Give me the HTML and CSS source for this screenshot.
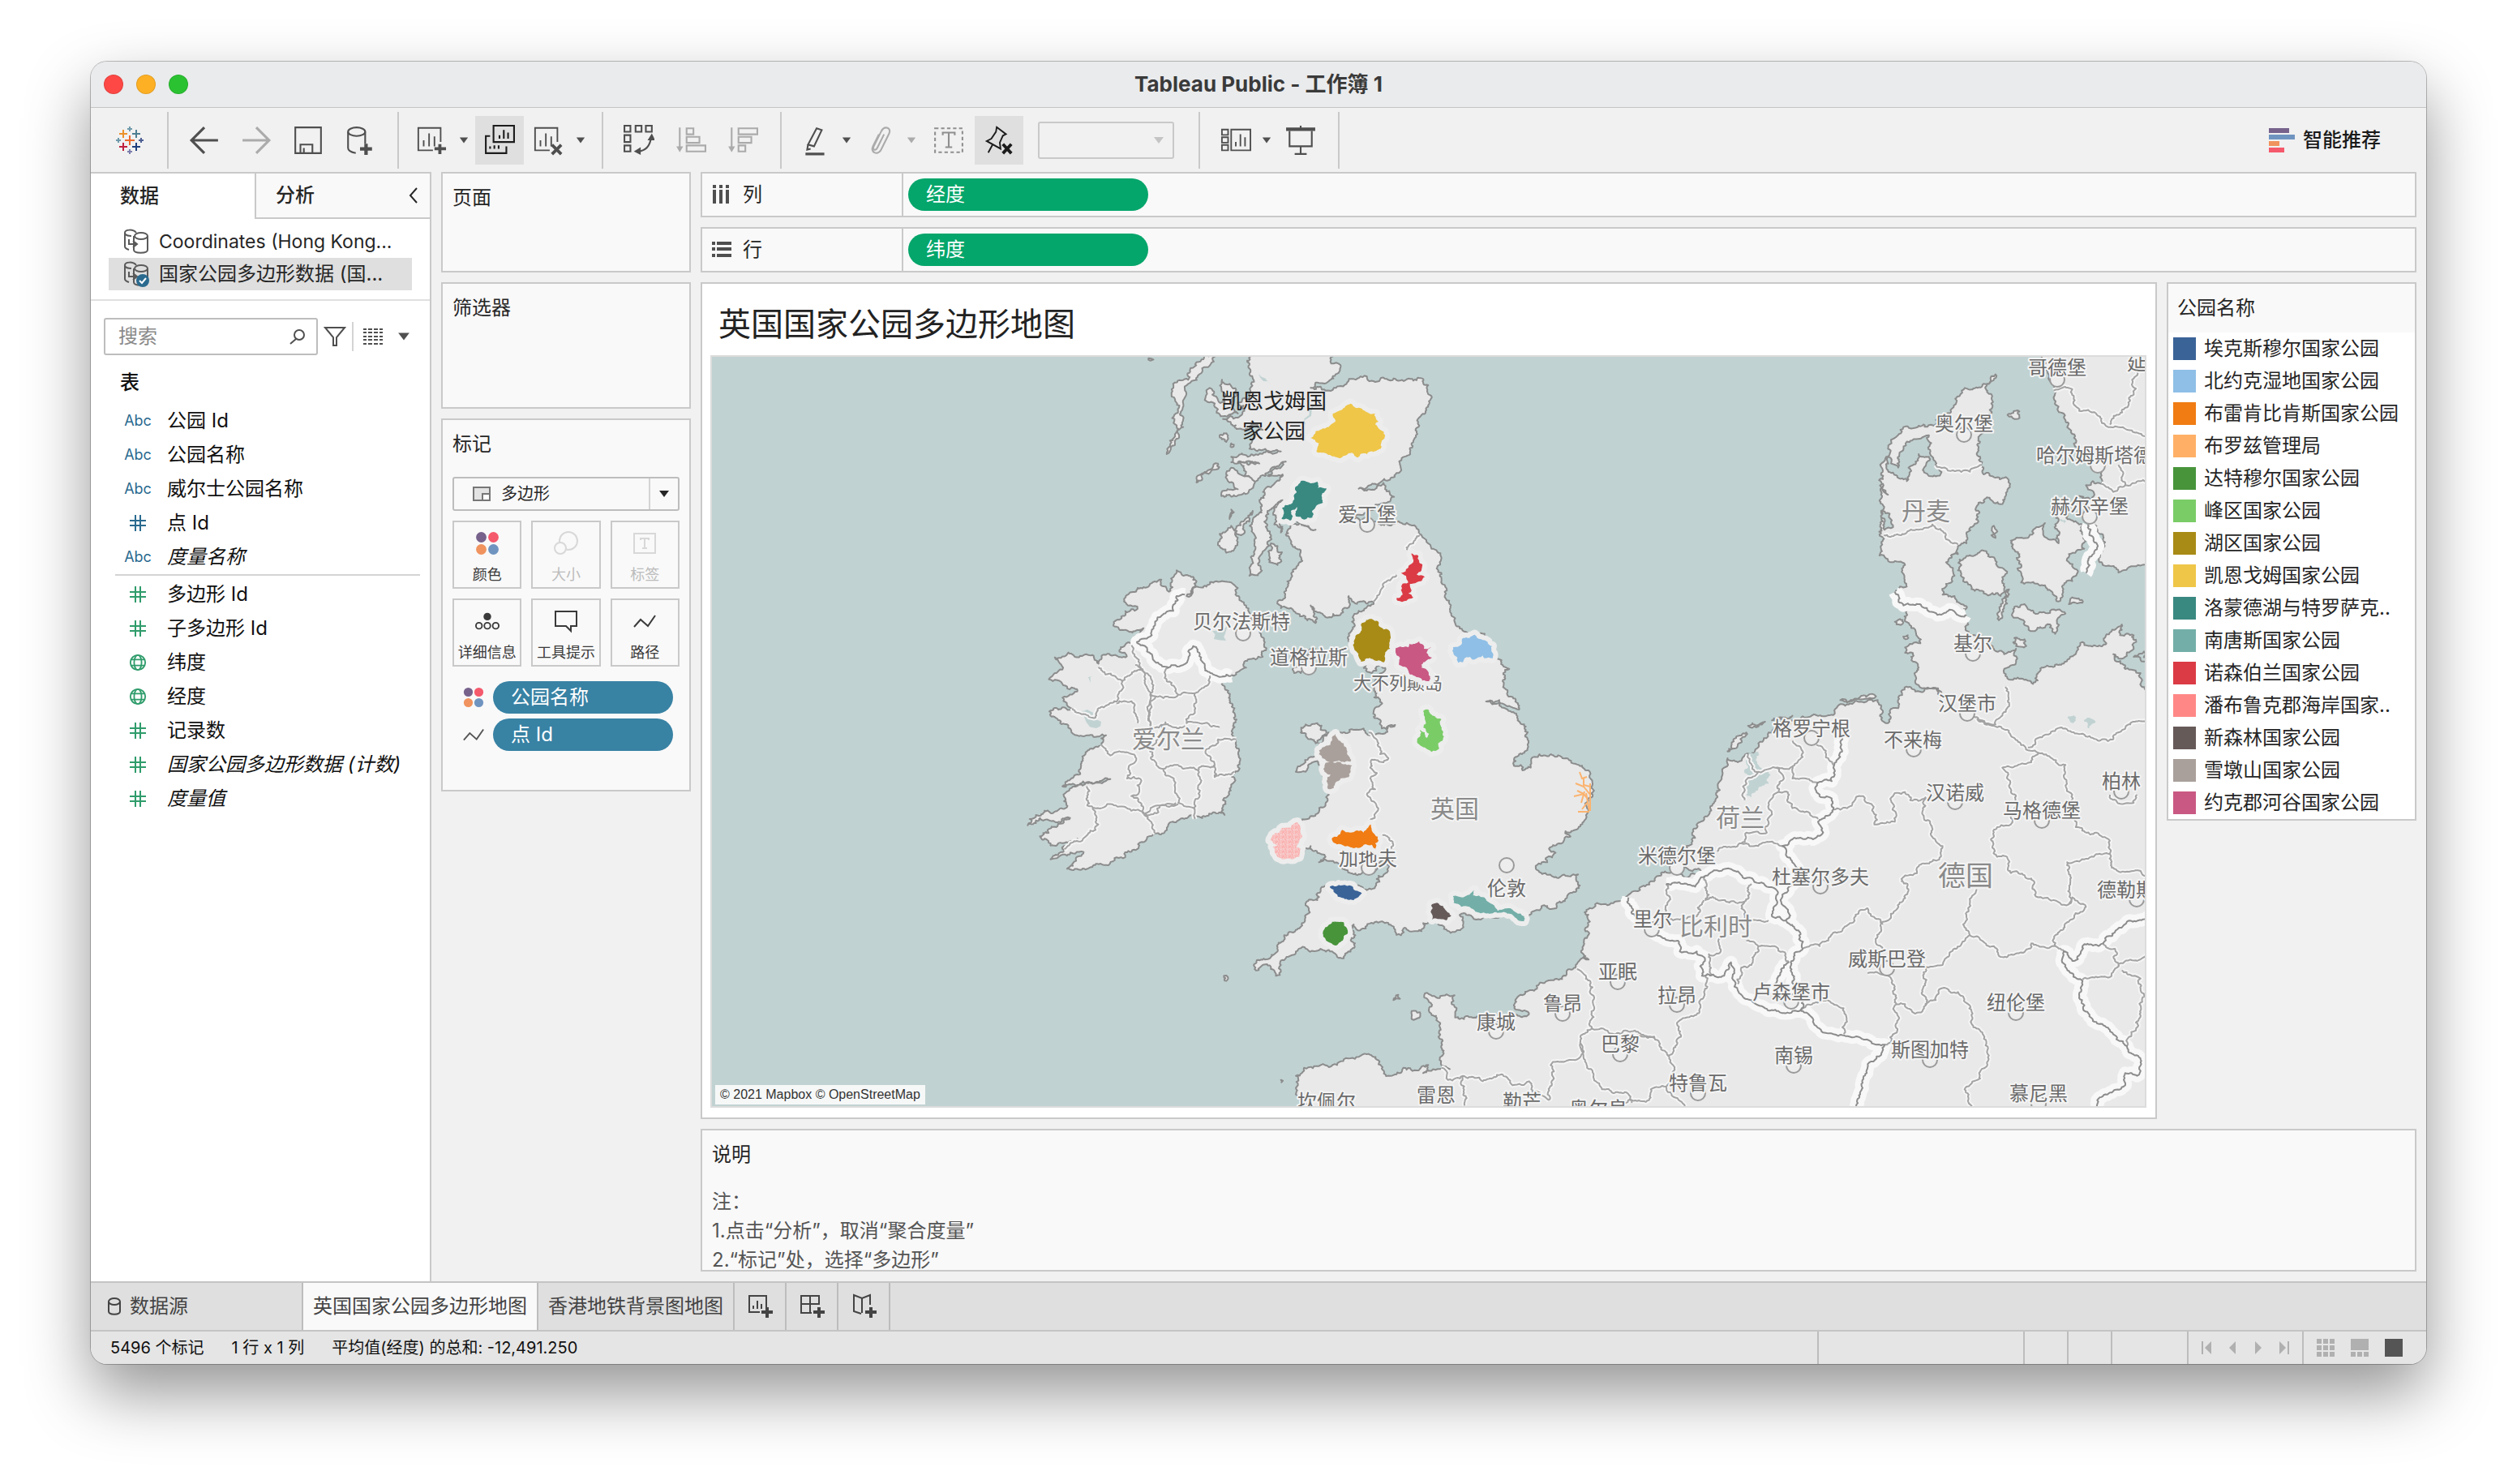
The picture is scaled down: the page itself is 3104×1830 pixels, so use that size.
FILE: index.html
```html
<!DOCTYPE html>
<html lang="zh-CN">
<head>
<meta charset="utf-8">
<title>Tableau Public - 工作簿 1</title>
<link rel="stylesheet" href="styles.css">
</head>
<body>
<svg class="sprite" aria-hidden="true">
  <defs>
    <symbol id="i-back" viewBox="0 0 36 36"><path class="s3" d="M34 18H3M18 3 3 18l15 15"/></symbol>
    <symbol id="i-fwd" viewBox="0 0 36 36"><path class="s3" d="M2 18h31M18 3l15 15-15 15"/></symbol>
    <symbol id="i-save" viewBox="0 0 36 36"><path class="s2" d="M3 3h30v30H3zM9 33V23h14v10M13 33v-6"/></symbol>
    <symbol id="i-dbadd" viewBox="0 0 36 36"><path class="s2" d="M4 8v19c0 3 4 5 9 6M24 8v14"/><ellipse class="s2" cx="14" cy="8" rx="10" ry="5"/><path class="s4" d="M25 22v13M18 28h14"/></symbol>
    <symbol id="i-sheetadd" viewBox="0 0 40 40"><path class="s2" d="M32 22V4H3v29h19M10 28v-8M17 28V11M24 28V15"/><path class="s4" d="M31 25v13M24 31h15"/></symbol>
    <symbol id="i-sheetdup" viewBox="0 0 36 36"><path class="s2" d="M11 1h24v19H11zM18 16v-4M23 16V6M28 16v-7M7 13H2v20h24v-8M7 28v-3M12 28v-4M17 28v-4"/></symbol>
    <symbol id="i-sheetclear" viewBox="0 0 40 40"><path class="s2" d="M32 22V4H3v29h19M10 28v-8M17 28V11M24 28V15"/><path class="s4" d="M25 26l12 12M37 26 25 38"/></symbol>
    <symbol id="i-swap" viewBox="0 0 36 36"><path class="s2" d="M1 1h7v7H1zM14 1h7v7h-7zM26 1h7v7h-7zM1 12h7v8H1zM1 24h7v7H1zM17 31c9-1 14-7 15-16"/><path d="m12 31 8-5v9zM28 18l9 0-4-8z"/></symbol>
    <symbol id="i-asc" viewBox="0 0 36 36"><path class="s2" d="M5 3v26M13 4h8v7h-8zM13 14h15v7H13zM13 24h22v7H13z"/><path d="m1 25 8 0-4 7z"/></symbol>
    <symbol id="i-desc" viewBox="0 0 36 36"><path class="s2" d="M5 3v26M13 4h22v7H13zM13 14h15v7H13zM13 24h8v7h-8z"/><path d="m1 25 8 0-4 7z"/></symbol>
    <symbol id="i-pen" viewBox="0 0 36 36"><path class="s2" d="m19 4 6 2-9 19-7-2zM9 23l-1 6 4-1"/><path class="s3" d="M6 34h22"/></symbol>
    <symbol id="i-clip" viewBox="0 0 36 36"><path class="s2" d="m22 11-8 16c-2 4-6 2-4-2l9-18c4-7 12-3 9 3L18 30c-4 6-12 2-9-5l7-14"/></symbol>
    <symbol id="i-text" viewBox="0 0 36 36"><path class="s2" stroke-dasharray="4 3" d="M2 4h32v28H2z"/><path class="s2" d="M11 12V9h14v3M18 9v17M14 26h8"/></symbol>
    <symbol id="i-pin" viewBox="0 0 40 40"><path class="s2" d="m17 3 12 9-4 2-4 9 1 8L4 21l6-3 6-9zM12 25 6 36"/><path class="s4" d="m25 25 11 12M36 25 25 37"/></symbol>
    <symbol id="i-cards" viewBox="0 0 40 36"><path class="s2" d="M2 4h8v7H2zM2 14h8v7H2zM2 24h8v7H2zM14 4h25v27H14zM20 26v-6M26 26V10M32 26V14"/></symbol>
    <symbol id="i-present" viewBox="0 0 36 36"><path class="s2" d="M5 7v18h26V7M18 1v4M18 25v9M11 34h14"/><path class="s4" d="M1 5h34"/></symbol>
    <symbol id="i-caret" viewBox="0 0 14 10"><path d="M1 1h12L7 9z"/></symbol>
    <symbol id="i-db" viewBox="0 0 34 34"><path class="s2" d="M16 6C12 1 2 2 2 6v17c0 2 2 3 5 4M2 7c1 2 4 3 8 3M13 10v17c0 5 17 5 17 0V10M7 14v6h9M12 16l5 4-5 4"/><ellipse class="s2" cx="22" cy="10" rx="8" ry="4"/></symbol>
    <symbol id="i-search" viewBox="0 0 20 20"><circle class="s2" cx="12" cy="8" r="6"/><path class="s2" d="m8 13-7 6"/></symbol>
    <symbol id="i-filter" viewBox="0 0 28 26"><path class="s2" d="M2 2h24L16 14v10h-4V14z"/></symbol>
    <symbol id="i-list" viewBox="0 0 24 20"><path class="s2" d="M0 1h4M6 1h5M13 1h5M20 1h4M0 5h4M6 5h5M13 5h5M20 5h4M0 10h4M6 10h5M13 10h5M20 10h4M0 14h4M6 14h5M13 14h5M20 14h4M0 19h4M6 19h5M13 19h5M20 19h4"/></symbol>
    <symbol id="i-hash" viewBox="0 0 22 22"><path class="s2" d="M8 1v20M14 1v20M1 8h20M1 14h20"/></symbol>
    <symbol id="i-globe" viewBox="0 0 24 24"><circle class="s2" cx="12" cy="12" r="10"/><ellipse class="s2" cx="12" cy="12" rx="5" ry="10"/><path class="s2" d="M3 8h18M3 16h18"/></symbol>
    <symbol id="i-color" viewBox="0 0 28 28"><circle cx="7" cy="7" r="6" fill="#77628c"/><circle cx="21" cy="7" r="6" fill="#f5596c"/><circle cx="7" cy="21" r="6" fill="#f0935e"/><circle cx="21" cy="21" r="6" fill="#7094c0"/></symbol>
    <symbol id="i-size" viewBox="0 0 30 30"><circle class="s2" cx="18" cy="12" r="11"/><circle class="s2" cx="8" cy="21" r="7"/></symbol>
    <symbol id="i-label" viewBox="0 0 30 28"><path class="s2" d="M2 2h26v24H2zM10 10V8h10v2M15 8v12M12 20h6"/></symbol>
    <symbol id="i-detail" viewBox="0 0 32 24"><circle cx="16" cy="6" r="5"/><circle class="s2" cx="5" cy="18" r="4"/><circle class="s2" cx="16" cy="18" r="4"/><circle class="s2" cx="27" cy="18" r="4"/></symbol>
    <symbol id="i-tip" viewBox="0 0 30 28"><path class="s2" d="M2 2h26v18h-7v6l-6-6H2z"/></symbol>
    <symbol id="i-path" viewBox="0 0 30 20"><path class="s2" d="m2 17 8-9 9 8L28 3"/></symbol>
    <symbol id="i-poly" viewBox="0 0 24 20"><path class="s2" d="M2 2h20v16H2z"/><path class="s2 hole" d="M13 10h9v8h-9z"/></symbol>
    <symbol id="i-src" viewBox="0 0 18 24"><path class="s2" d="M2 6v12c0 5 14 5 14 0V6"/><ellipse class="s2" cx="9" cy="6" rx="7" ry="4"/></symbol>
    <symbol id="i-t1" viewBox="0 0 32 32"><path class="s2" d="M24 17V3H3v20h13M8 19v-4M13 19V9M18 19v-6"/><path class="s4" d="M25 17v13M18 23h14"/></symbol>
    <symbol id="i-t2" viewBox="0 0 32 32"><path class="s2" d="M25 14V3H3v21h13M3 13h22M14 3v21"/><path class="s4" d="M25 17v13M18 23h14"/></symbol>
    <symbol id="i-t3" viewBox="0 0 32 32"><path class="s2" d="M24 14V2l-10 4L4 2v20l9 3M14 6v18"/><path class="s4" d="M25 17v13M18 23h14"/></symbol>
  </defs>
</svg>

<div class="window">
  <header class="titlebar">
    <div class="lights"><span class="light red"></span><span class="light amber"></span><span class="light green"></span></div>
    <h1>Tableau Public - 工作簿 1</h1>
  </header>

  <nav class="toolbar" aria-label="工具栏">
    <div class="group brand">
      <svg width="36" height="36" viewBox="-18 -18 36 36" fill="none" stroke-width="2">
        <path stroke="#eb6a2d" d="M0-6V6M-6 0H6"/><path stroke="#eb9129" d="M-8-13v10M-13-8h10"/><path stroke="#4e7f92" d="M8-13v10M3-8h10"/><path stroke="#c0203f" d="M-8 3v10M-13 8h10"/><path stroke="#1f3f7e" d="M8 3v10M3 8h10"/><path stroke="#6f9aab" d="M0-17v6M-3-14h6M-14-3v6M-17 0h6"/><path stroke="#7c7fae" d="M0 11v6M-3 14h6"/><path stroke="#4e5f93" d="M14-3v6M11 0h6"/>
      </svg>
    </div>
    <div class="group">
      <button class="tool wide" aria-label="撤消"><svg><use href="#i-back"/></svg></button>
      <button class="tool wide" aria-label="重做" disabled><svg><use href="#i-fwd"/></svg></button>
      <button class="tool wide" aria-label="保存"><svg><use href="#i-save"/></svg></button>
      <button class="tool wide" aria-label="新建数据源"><svg><use href="#i-dbadd"/></svg></button>
    </div>
    <div class="group tight">
      <button class="tool" aria-label="新建工作表"><svg><use href="#i-sheetadd"/></svg></button>
      <button class="drop" aria-label="新建选项"><svg><use href="#i-caret"/></svg></button>
      <button class="tool on" aria-label="复制工作表"><svg><use href="#i-sheetdup"/></svg></button>
      <button class="tool" aria-label="清除工作表"><svg><use href="#i-sheetclear"/></svg></button>
      <button class="drop" aria-label="清除选项"><svg><use href="#i-caret"/></svg></button>
    </div>
    <div class="group">
      <button class="tool wide" aria-label="交换行和列"><svg><use href="#i-swap"/></svg></button>
      <button class="tool wide" aria-label="升序" disabled><svg><use href="#i-asc"/></svg></button>
      <button class="tool wide" aria-label="降序" disabled><svg><use href="#i-desc"/></svg></button>
    </div>
    <div class="group format">
      <button class="tool slim" aria-label="突出显示"><svg><use href="#i-pen"/></svg></button>
      <button class="drop" aria-label="突出显示选项"><svg><use href="#i-caret"/></svg></button>
      <button class="tool slim" aria-label="组成员" disabled><svg><use href="#i-clip"/></svg></button>
      <button class="drop" aria-label="组选项" disabled><svg><use href="#i-caret"/></svg></button>
      <button class="tool wide" aria-label="显示标记标签"><svg class="soft"><use href="#i-text"/></svg></button>
      <button class="tool on" aria-label="固定轴"><svg><use href="#i-pin"/></svg></button>
      <span class="fit"><select aria-label="适合" disabled><option></option></select><svg><use href="#i-caret"/></svg></span>
    </div>
    <div class="group show">
      <button class="tool slim" aria-label="显示卡"><svg><use href="#i-cards"/></svg></button>
      <button class="drop" aria-label="显示卡选项"><svg><use href="#i-caret"/></svg></button>
      <button class="tool slim" aria-label="演示模式"><svg><use href="#i-present"/></svg></button>
    </div>
    <button class="showme"><svg width="32" height="30"><path fill="#77628c" d="M0 0h25v6H0z"/><path fill="#7094c0" d="M0 8h32v6H0z"/><path fill="#f0935e" d="M0 16h13v6H0z"/><path fill="#f5596c" d="M0 24h19v6H0z"/></svg>智能推荐</button>
  </nav>

  <main class="workspace">
    <aside class="data">
      <div class="tabs">
        <button class="tab active">数据</button>
        <button class="tab">分析<svg width="12" height="20"><path class="s2" d="M10 1 2 10l8 9"/></svg></button>
      </div>
      <ul class="sources">
        <li class="latin"><svg><use href="#i-db"/></svg>Coordinates (Hong Kong...</li>
        <li class="picked"><svg><use href="#i-db"/><circle cx="24" cy="25" r="8" fill="#2a6a8f"/><path d="m20 25 3 3 5-6" fill="none" stroke="#fff" stroke-width="2"/></svg>国家公园多边形数据 (国...</li>
      </ul>
      <div class="finder">
        <label class="search"><input type="text" placeholder="搜索" aria-label="搜索"><svg><use href="#i-search"/></svg></label>
        <button class="filter" aria-label="筛选"><svg width="28" height="26"><use href="#i-filter"/></svg></button>
        <button class="view" aria-label="视图"><svg width="24" height="20"><use href="#i-list"/></svg></button>
        <button class="more" aria-label="更多"><svg width="16" height="12"><use href="#i-caret"/></svg></button>
      </div>
      <h2>表</h2>
      <ul class="fields dims">
        <li><span class="kind">Abc</span>公园 Id</li>
        <li><span class="kind">Abc</span>公园名称</li>
        <li><span class="kind">Abc</span>威尔士公园名称</li>
        <li><span class="kind"><svg><use href="#i-hash"/></svg></span>点 Id</li>
        <li class="gen"><span class="kind">Abc</span>度量名称</li>
      </ul>
      <ul class="fields meas">
        <li><span class="kind"><svg><use href="#i-hash"/></svg></span>多边形 Id</li>
        <li><span class="kind"><svg><use href="#i-hash"/></svg></span>子多边形 Id</li>
        <li><span class="kind"><svg><use href="#i-globe"/></svg></span>纬度</li>
        <li><span class="kind"><svg><use href="#i-globe"/></svg></span>经度</li>
        <li><span class="kind"><svg><use href="#i-hash"/></svg></span>记录数</li>
        <li class="gen"><span class="kind"><svg><use href="#i-hash"/></svg></span>国家公园多边形数据 (计数)</li>
        <li class="gen"><span class="kind"><svg><use href="#i-hash"/></svg></span>度量值</li>
      </ul>
    </aside>

    <div class="cards">
      <section class="card pages"><h2>页面</h2></section>
      <section class="card filters"><h2>筛选器</h2></section>
      <section class="card marks">
        <h2>标记</h2>
        <div class="marktype">
          <svg class="glyph"><use href="#i-poly"/></svg>
          <select aria-label="标记类型"><option>多边形</option></select>
          <span class="arrow"><svg><use href="#i-caret"/></svg></span>
        </div>
        <div class="markgrid">
          <button><svg><use href="#i-color"/></svg>颜色</button>
          <button disabled><svg><use href="#i-size"/></svg>大小</button>
          <button disabled><svg><use href="#i-label"/></svg>标签</button>
          <button><svg><use href="#i-detail"/></svg>详细信息</button>
          <button><svg><use href="#i-tip"/></svg>工具提示</button>
          <button><svg><use href="#i-path"/></svg>路径</button>
        </div>
        <div class="encodings">
          <svg><use href="#i-color"/></svg><button class="pill blue">公园名称</button>
          <svg><use href="#i-path"/></svg><button class="pill blue">点 Id</button>
        </div>
      </section>
    </div>

    <div class="sheet">
      <section class="shelf">
        <h2><svg><path d="M1 1h4v4H1zM9 1h4v4H9zM17 1h4v4h-4zM1 7h4v17H1zM9 7h4v17H9zM17 7h4v17h-4z"/></svg>列</h2>
        <button class="pill green">经度</button>
      </section>
      <section class="shelf">
        <h2><svg><path d="M0 3h4v4H0zM0 10h4v4H0zM0 18h4v4H0zM6 3h18v4H6zM6 10h18v4H6zM6 18h18v4H6z"/></svg>行</h2>
        <button class="pill green">纬度</button>
      </section>
      <div class="stage">
        <section class="viz">
          <h2>英国国家公园多边形地图</h2>
          <div class="map">
            <svg class="chart" viewBox="878 440 1767 924" preserveAspectRatio="xMidYMid slice" role="img" aria-label="英国国家公园多边形地图">
              <defs>
                <pattern id="speckle" width="20" height="18" patternUnits="userSpaceOnUse">
                  <path d="M0 0h20v18H0z" fill="#f6cfce"/>
                  <path d="M1 2l4 3M8 1l2 5M14 2l4 2M2 9l5 1M10 8l3 4M17 8l1 5M4 14l2 3M11 15l5 1M6 6l3 1M13 5l2 3" stroke="#ff8886" stroke-width="2" fill="none"/>
                </pattern>
                <g id="regions" data-rough="0.13">
                  <g transform="translate(1400 430) scale(.40816 .33333)">
                    <path d="M860 690 840 720 820 745M790 835 750 880 720 935M705 1420 735 1460 740 1500 765 1515 750 1530 715 1520 710 1550 730 1570 710 1590 725 1630 700 1650 730 1695 725 1720 710 1745M745 1800 770 1820 775 1850"/>
                    <path d="M-111 1178-90 1205-39 1232-39 1260-55 1305-111 1330-120 1365-190 1330M-57 1313-11 1304 7 1385M-39 1232 16 1187-11 1097M16 1187 38 1259 61 1286 43 1340 47 1394M-102 1466-75 1505-30 1493 0 1510-20 1550-25 1590 16 1592 12 1640-12 1655 16 1680 25 1720 70 1715 75 1690 123 1680M-147 1619-145 1690-120 1700-70 1685 25 1715 61 1793M-130 1700-120 1780-160 1820-215 1850M0 1170 30 1200 55 1245 45 1345 50 1405 90 1390 150 1395M100 1180 95 1230 130 1280 180 1275 210 1250 225 1210M180 1275 180 1340 155 1385 210 1385 255 1400M130 1540 85 1555 50 1520 45 1490 90 1380M85 1555 120 1620 130 1680 180 1705 180 1740M25 1720 75 1690 130 1685M180 1705 195 1610 190 1560 130 1540M190 1560 240 1540 240 1585 300 1565M215 1500 250 1445 305 1445M215 1500 240 1540M61 1286 110 1290 130 1280"/>
                    <path d="M1335 2295 1375 2340 1385 2430 1380 2515 1430 2530 1500 2525 1568 2550M1380 2515 1345 2560 1345 2620 1255 2650 1265 2700 1250 2780M1345 2570 1365 2660 1410 2740 1480 2750 1500 2790M925 2660 945 2705 990 2690 1050 2710 1110 2685 1140 2725 1190 2710 1200 2750 1250 2780M990 2690 995 2800"/>
                  </g>
                  <g transform="translate(2000 430) scale(.4209 .33333)">
                    <path d="M768 690 830 685 870 670 910 650 960 710 985 725M920 430 970 450 1020 455 1055 430M1265 155 1320 150 1340 230 1390 240 1425 290 1480 300 1535 325M1510 85 1500 170 1430 280M1455 430 1475 505M1405 500 1440 530 1475 505 1545 495M1125 1250 1135 1310 1095 1390 1040 1370"/>
                    <g transform="translate(0 1350)">
                      <path d="M620 355 660 350 700 305 735 340 740 410 800 400 790 310 830 290 845 320 890 310 880 370 910 430 940 490 930 540 870 565 865 590 820 620 840 650 800 730 765 770 745 850 760 880M530 870 580 860 620 810 680 770 720 720 765 780M1140 410 1090 430 1090 500 1100 530 1130 535 1140 590 1200 610 1210 670 1310 705 1305 550 1390 520 1430 520 1430 470 1390 440 1330 420 1310 380M1140 410 1150 350 1140 290 1115 200 1200 180 1220 145 1300 190 1310 290 1320 340M1220 145 1180 120 1130 60 1050 30 1000 0M1190 125 1220 90 1300 55 1380 90 1440 95 1490 40 1545 10M1430 520 1450 580 1545 600M1310 705 1320 680 1360 715 1310 770 1270 820 1270 860 1200 850 1175 885 1110 900 1090 860 1020 820 1000 780 1020 700 1040 650M1020 820 980 870 940 930 885 930 890 1080 860 1110 830 1075 805 1075 800 1010 780 970 720 960M805 1075 810 1120 790 1210 770 1225M890 1080 920 1060 930 1020 985 1030 1020 1080 1030 1160 1060 1190 1070 1290 1050 1350 1010 1380 1030 1460M1270 860 1300 880M1410 850 1445 870 1450 940 1430 975 1350 985M1450 940 1490 910 1545 890M1465 950 1520 980 1515 1130 1480 1230M1430 300 1450 325 1500 330 1510 300"/>
                      <path d="M370 150 400 215 450 200 500 195 530 160 520 120 500 100M570 115 620 190M450 200 475 240 455 270 460 290 430 330 425 440 365 440 350 480M460 290 490 300 500 350 575 390M500 195 500 240 575 255M280 510 350 480 400 490 430 475 470 490M400 215 355 270 360 320M240 600 255 670 245 690 360 695 380 630M130 630 140 760 220 750 240 690M360 695 365 760 430 765M290 830 290 880 255 890 265 970M365 840 400 860 440 860 480 890 490 920M400 860 380 930 350 940 340 1000M245 970 240 1050 210 1120 165 1140 160 1210 135 1265 150 1330 130 1380 85 1390 80 1430 0 1440M135 1265 95 1195 0 1200M525 1100 540 1080 610 1065 650 1090 660 1140 650 1185M130 1380 185 1460"/>
                    </g>
                  </g>
                </g>
                <g id="nations" data-rough="0.13">
                  <path d="M150 910 125 915 115 970 60 1010 50 1060 5 1085 50 1130 100 1180 145 1170 160 1120 175 1100 195 1130 210 1180 235 1205 290 1210" transform="translate(1400 430) scale(.40816 .33333)"/>
                  <g transform="translate(2000 430) scale(.4209 .33333)">
                    <path d="M800 900 825 950 880 955 925 985 960 965 1010 985M1365 650 1370 690 1395 730 1370 770 1360 830"/>
                    <path transform="translate(0 1350)" d="M640 80 640 160 620 200 615 250 575 255 575 295 610 310 620 355 575 400 590 440 560 465 500 465 470 490 495 540 515 580 490 640 465 690 490 740 480 765 520 820 530 870 495 920 500 990 530 1060 525 1100M130 630 180 630 215 640 245 600 265 585 320 575 345 590 360 610 410 625 455 655 440 750 480 765M490 920 455 980 445 1030M20 680 30 740 90 800 120 830 165 840 170 880 220 880 240 900 235 970 300 970 320 920 330 960 330 1010 380 1060 420 1090 500 1100 530 1100 560 1140 590 1180 650 1190 700 1200 770 1225 720 1310 690 1460M1545 750 1480 770 1410 850 1350 860 1320 915 1295 880 1300 930 1350 990 1340 1040 1370 1120 1430 1170 1480 1230 1520 1290 1510 1340 1475 1330 1470 1380 1400 1420 1380 1460"/>
                  </g>
                </g>
                <g id="parks" data-rough="0.1" transform="translate(1400 430) scale(.40816 .33333)">
                  <path fill="#efc648" d="M650 203 665 218 685 222 700 235 725 240 735 270 725 280 740 300 755 320 745 340 742 370 710 380 700 390 680 390 672 403 655 385 640 392 620 405 600 398 570 385 548 382 555 350 530 330 545 305 580 290 605 265 597 240 620 228 635 212z"/>
                  <path fill="#398981" d="M485 510 500 490 530 498 550 492 552 515 578 517 565 535 567 570 545 585 535 625 510 632 485 620 488 585 470 600 468 636 442 630 443 590 470 575 480 550z"/>
                  <path fill="#db3b45" d="M835 757 855 765 858 785 868 800 865 820 850 835 875 845 850 865 830 870 835 895 825 905 840 920 820 932 792 932 790 922 808 910 805 875 825 865 818 840 803 830 825 810 840 790z"/>
                  <path fill="#a88b16" d="M715 1000 735 1010 740 1030 765 1040 772 1070 770 1110 755 1130 752 1160 730 1155 700 1145 682 1158 668 1120 665 1070 680 1050 685 1015z"/>
                  <path fill="#8fbfe6" d="M960 1105 985 1095 990 1070 1010 1070 1025 1058 1045 1075 1065 1085 1078 1100 1080 1145 1055 1145 1050 1135 1025 1150 1010 1140 995 1145 990 1160 975 1162 962 1130z"/>
                  <path fill="#7acc67" d="M870 1340 885 1335 905 1360 925 1370 930 1445 915 1460 918 1480 895 1492 875 1475 852 1450 860 1410 875 1420 880 1440 888 1425 870 1400 875 1370z"/>
                  <path fill="#aaa09b" d="M605 1425 615 1450 630 1460 640 1500 650 1528 580 1526 565 1515 555 1500 565 1475 590 1465zM575 1532 655 1542 645 1585 620 1590 605 1605 600 1625 582 1628 578 1600 590 1575 572 1565z"/>
                  <path fill="#f07c13" d="M595 1810 620 1795 625 1780 650 1790 690 1790 700 1775 712 1760 718 1790 733 1805 735 1820 725 1830 728 1855 715 1835 690 1835 660 1848 640 1840 600 1828z"/>
                  <path fill="#3a6398" d="M588 1990 625 1985 655 1988 665 2005 685 2015 675 2028 660 2040 625 2032 605 2015z"/>
                  <path fill="#48943b" d="M595 2120 630 2122 640 2145 630 2180 620 2195 605 2208 590 2198 575 2185 570 2150z"/>
                  <path fill="#665a59" d="M897 2055 912 2050 930 2062 940 2080 955 2098 940 2115 920 2110 897 2112z"/>
                  <path fill="#73afa8" d="M960 2025 990 2030 1010 2020 1025 2002 1020 2022 1055 2030 1065 2045 1085 2060 1095 2080 1125 2070 1150 2085 1175 2100 1175 2118 1140 2095 1110 2085 1070 2090 1035 2085 1010 2065 985 2065 962 2050z"/>
                  <path fill="url(#speckle)" d="M490 1752 500 1780 495 1825 485 1845 500 1850 495 1880 460 1886 425 1870 415 1842 430 1838 408 1818 415 1800 445 1772 470 1772z"/>
                  <path fill="#c95883" d="M787 1108 825 1105 828 1092 858 1083 870 1095 872 1110 895 1103 880 1125 897 1143 870 1160 865 1180 885 1195 888 1230 850 1215 830 1205 820 1180 797 1170 800 1145 790 1135z"/>
                </g>
              </defs>

              <g data-rough="0.17">
                <g class="land" transform="translate(1400 430) scale(.40816 .33333)">
                  <path d="M345 0 592 0 592 55 620 60 605 95 585 120 545 125 530 145 560 140 575 155 600 145 640 125 660 112 680 103 720 120 760 112 800 118 840 118 870 112 885 135 895 175 885 215 865 245 855 280 850 310 835 350 830 385 805 405 800 430 795 460 770 485 740 495 710 505 690 520 675 518 700 525 730 510 750 497 755 520 770 540 782 548 770 565 740 575 700 600 660 620 680 640 730 640 790 640 830 652 850 665 865 690 880 715 895 740 912 750 920 790 925 850 935 900 950 945 955 980 965 1010 980 1035 1000 1048 1025 1050 1060 1065 1080 1095 1090 1145 1110 1170 1130 1185 1112 1200 1110 1230 1125 1270 1150 1300 1160 1335 1135 1325 1100 1300 1060 1305 1100 1310 1125 1335 1155 1360 1175 1390 1188 1450 1185 1480 1160 1500 1142 1535 1165 1540 1170 1560 1195 1550 1205 1510 1240 1505 1300 1515 1340 1540 1370 1560 1382 1610 1378 1660 1365 1700 1355 1750 1330 1780 1300 1785 1315 1805 1280 1830 1250 1850 1270 1865 1240 1885 1245 1900 1210 1920 1240 1940 1265 1955 1300 1950 1338 1945 1330 2010 1300 2035 1275 2050 1272 2070 1245 2062 1190 2095 1170 2120 1120 2100 1080 2105 1030 2112 980 2095 990 2135 965 2158 930 2135 900 2115 870 2125 865 2155 810 2145 803 2170 775 2135 740 2120 700 2135 670 2150 660 2130 665 2170 655 2220 640 2235 630 2255 610 2250 595 2230 560 2220 520 2222 485 2230 455 2255 440 2280 440 2305 425 2320 410 2295 385 2280 365 2300 358 2280 380 2260 410 2250 430 2230 450 2170 485 2150 515 2095 518 2045 550 2040 560 2000 590 1985 640 1978 690 2000 725 1990 735 1950 765 1920 775 1880 755 1890 720 1940 680 1945 650 1940 615 1905 590 1895 555 1900 575 1880 550 1865 530 1840 510 1850 500 1880 460 1890 415 1860 420 1840 400 1820 415 1790 450 1765 490 1745 520 1740 550 1720 575 1690 585 1650 575 1620 570 1570 555 1525 530 1535 515 1565 485 1565 510 1535 545 1500 555 1460 585 1425 620 1420 660 1410 690 1405 720 1430 760 1410 785 1392 745 1405 735 1370 720 1345 740 1298 722 1290 722 1260 745 1200 755 1180 730 1175 715 1200 700 1195 695 1165 680 1150 665 1120 655 1085 642 1070 655 1040 655 1010 675 970 700 955 720 945 715 935 685 935 655 935 645 915 648 950 620 985 580 995 565 980 550 975 530 950 540 985 545 1015 520 1005 490 980 460 960 440 960 430 935 445 930 450 900 470 850 480 815 505 785 500 750 475 730 465 700 470 650 500 645 545 670 500 645 470 635 440 630 440 680 420 650 420 600 445 560 400 600 390 640 410 690 395 740 375 790 375 830 345 840 345 810 360 760 365 700 355 640 380 590 375 560 400 510 445 465 400 470 455 418 400 460 365 490 330 470 310 420 375 425 290 420 290 400 340 400 440 380 345 370 360 330 385 300 360 280 330 300 290 280 265 260 310 255 330 230 310 200 345 180 350 130 345 60z"/>
                  <path d="M515 1390 550 1385 560 1410 585 1420 560 1445 545 1460 520 1440 500 1420zM540 1105 550 1130 530 1175 500 1200 480 1200 500 1160zM410 720 430 730 440 780 430 800 405 790 402 750zM290 655 310 700 300 740 275 755 250 720 255 685 275 675zM355 600 345 640 320 690 305 680 320 640zM290 440 310 460 360 490 350 520 320 540 260 545 270 525 310 520 280 490 275 460zM250 425 225 460 185 495 185 480 215 455zM250 20 200 90 160 130 150 180 140 230 145 290 120 340 95 390 105 340 125 290 125 200 110 150 120 125 160 115 165 80 200 40 230 20zM210 190 225 145 250 190 270 200 262 115 285 130 310 170 290 200 310 240 265 250 240 215zM255 320 280 320 275 345zM290 595 298 605 285 630zM835 2450 860 2455 858 2475 835 2480zM780 2410 795 2390 800 2405zM268 2320 280 2325 270 2338zM290 350 298 355 292 365zM40 35 55 40 45 44zM440 2705 446 2708 442 2714z"/>
                  <path d="M125 820 185 860 180 880 155 915 185 880 215 880 245 860 290 865 310 885 315 920 335 950 345 1000 380 1060 390 1090 385 1140 340 1150 335 1180 305 1205 280 1215 265 1235 285 1300 300 1330 300 1400 313 1480 315 1530 300 1570 290 1620 265 1670 270 1725 235 1715 190 1730 130 1745 100 1760 90 1785 61 1793 16 1826-30 1874-111 1907-166 1928-206 1924-156 1862-256 1889-175 1813-256 1838-288 1804-197 1736-300 1745-325 1763-300 1725-274 1709-211 1700-211 1664-188 1619-75 1592-220 1619-166 1574-152 1502-102 1460-88 1430-170 1433-202 1394-256 1358-247 1331-193 1331-220 1291-175 1268-261 1223-220 1187-243 1142-202 1124-129 1133-111 1165-102 1137-30 1142-48 1115 16 1061 25 1034-30 1040-66 1025-30 971 7 962-34 935 7 885 43 876 79 854 102 899 111 863z"/>
                </g>
                <g class="land" transform="translate(2000 430) scale(.4209 .33333)">
                  <path d="M1095 95 1070 130 1070 160 1085 190 1080 240 1060 310 1045 335 1050 400 1060 440 1060 465 1090 475 1125 475 1138 500 1125 545 1110 575 1090 570 1070 550 1045 570 1045 640 1010 680 1010 720 985 730 985 760 950 790 975 840 950 870 940 910 975 915 1010 960 1005 985 1015 1020 1015 1060 1050 1060 1090 1110 1120 1130 1155 1110 1155 1160 1120 1200 1130 1220 1170 1220 1205 1240 1230 1180 1295 1165 1330 1130 1350 1085 1390 1100 1420 1090 1430 1050 1465 1020 1460 1060 1500 1060 1500 1110 1470 1145 1440 1130 1475 1185 1520 1200 1535 1270 1600 1270 1600 2850-882 2850-955 2735-955 2690-931 2660-882 2650-834 2650-795 2625-747 2610-718 2630-679 2690-640 2660-601 2670-567 2650-582 2680-533 2665-504 2665-529 2650-529 2580-533 2510-558 2460-567 2410-577 2385-533 2402-490 2392-490 2435-475 2480-436 2475-378 2490-330 2470-272 2458-310 2445-296 2390-242 2350-184 2335-136 2290-116 2255-97 2260-112 2240-102 2180-109 2085-78 2055 10 2030 20 2020 110 1950 160 1940 200 1950 240 1945 215 1925 150 1920 190 1840 215 1810 210 1785 250 1730 280 1660 300 1550 310 1515 340 1530 375 1500 400 1460 430 1420 450 1400 530 1360 620 1355 640 1315 750 1300 765 1340 760 1370 780 1385 785 1340 810 1330 810 1290 835 1250 860 1268 915 1258 940 1285 920 1255 870 1245 860 1210 870 1180 855 1135 830 1125 830 1105 875 1090 860 1040 830 1000 830 970 800 930 815 880 835 880 830 800 790 790 755 765 768 700 760 600 765 450 775 400 780 370 800 330 825 290 870 285 920 280 960 240 1005 145 1060 130z"/>
                  <path d="M990 780 1050 750 1085 770 1110 810 1120 870 1110 915 1060 905 1000 860 985 820zM1140 710 1190 700 1215 660 1240 645 1245 700 1280 720 1270 650 1290 610 1350 650 1355 740 1310 760 1310 790 1335 830 1320 860 1290 880 1290 920 1280 935 1240 875 1170 865 1165 760zM1150 955 1180 945 1220 980 1260 965 1300 980 1275 1010 1270 1055 1255 1020 1210 1045 1145 990zM1320 920 1350 940 1310 945zM1135 890 1120 960 1105 1005 1100 980zM1150 1070 1180 1075 1185 1100 1155 1100zM1130 245 1165 232 1150 260zM1090 655 1095 700 1083 690zM1225 0 1250 110 1270 150 1275 210 1295 240 1305 290 1325 330 1335 370 1380 420 1400 450 1405 500 1380 490 1360 505 1385 540 1340 545 1370 620 1395 680 1415 730 1400 790 1455 828 1500 805 1600 800 1600 0zM370 1395 420 1380 375 1400zM310 1490 335 1440 365 1420 325 1480zM440 1375 500 1358 490 1368zM640 1300 740 1280 745 1286zM800 1010 815 1000 825 1012 805 1020zM825 1065 838 1060 832 1075z"/>
                  <path class="water" d="M850 340 900 320 910 400 925 470 890 460 900 400 870 390 840 440 835 490 780 450 780 400 810 440 820 380zM765 600 785 610 795 660 770 670zM765 500 780 540 768 530zM1530 1120 1500 1140 1540 1160z"/>
                  <path class="lake" d="M370 1500 400 1490 400 1540 430 1565 430 1610 380 1660 365 1650 385 1580 360 1570zM1310 1360 1325 1355 1322 1385zM1355 1380 1370 1365 1385 1385 1370 1405zM1285 630 1300 635 1295 655z"/>
                </g>
                <path class="lake" d="M1495 778 1514 772 1512 790 1497 788zM1552 461 1567 474 1558 470zM1606 520 1620 500 1610 524zM1342 835 1350 832 1345 842zM1333 877 1358 890 1352 898z"/>
              </g>

              <g id="borders">
                <use href="#regions" class="halo"/>
                <use href="#nations" class="halo broad"/>
                <use href="#regions" class="edge"/>
                <use href="#nations" class="edge strong"/>
              </g>

              <g class="towns">
                <circle cx="1686" cy="647" r="9"/><circle cx="1533" cy="781" r="9"/><circle cx="1614" cy="823" r="9"/><circle cx="1688" cy="1070" r="9"/><circle cx="1858" cy="1067" r="9"/><circle cx="1995" cy="1211" r="9"/><circle cx="1927" cy="1250" r="9"/><circle cx="1845" cy="1272" r="9"/><circle cx="1998" cy="1300" r="9"/><circle cx="2537" cy="468" r="9"/><circle cx="2422" cy="536" r="9"/><circle cx="2587" cy="574" r="9"/><circle cx="2577" cy="637" r="9"/><circle cx="2433" cy="806" r="9"/><circle cx="2426" cy="880" r="9"/><circle cx="2234" cy="910" r="9"/><circle cx="2360" cy="924" r="9"/><circle cx="2411" cy="989" r="9"/><circle cx="2518" cy="1012" r="9"/><circle cx="2616" cy="976" r="9"/><circle cx="2068" cy="1070" r="9"/><circle cx="2245" cy="1093" r="9"/><circle cx="2635" cy="1109" r="9"/><circle cx="2037" cy="1146" r="9"/><circle cx="2327" cy="1194" r="9"/><circle cx="2209" cy="1235" r="9"/><circle cx="2068" cy="1239" r="9"/><circle cx="2486" cy="1249" r="9"/><circle cx="2380" cy="1307" r="9"/><circle cx="2212" cy="1314" r="9"/><circle cx="2094" cy="1348" r="9"/><circle cx="2514" cy="1361" r="9"/>
              </g>
              <g class="names">
                <text x="1686" y="643">爱丁堡</text><text x="1531" y="775">贝尔法斯特</text><text x="1614" y="819">道格拉斯</text><text class="isle" x="1724" y="850">大不列颠岛</text><text x="1687" y="1067">加地夫</text><text x="1858" y="1104">伦敦</text><text x="1995" y="1207">亚眠</text><text x="1927" y="1246">鲁昂</text><text x="1845" y="1269">康城</text><text x="1998" y="1296">巴黎</text><text x="1636" y="1367">坎佩尔</text><text x="1771" y="1359">雷恩</text><text x="1877" y="1367">勒芒</text><text x="1971" y="1376">奥尔良</text>
                <text x="2537" y="462">哥德堡</text><text x="2659" y="456">延雪平</text><text x="2422" y="531">奥尔堡</text><text x="2583" y="570">哈尔姆斯塔德</text><text x="2577" y="633">赫尔辛堡</text><text x="2433" y="802">基尔</text><text x="2426" y="876">汉堡市</text><text x="2234" y="907">格罗宁根</text><text x="2359" y="921">不来梅</text><text x="2411" y="986">汉诺威</text><text x="2518" y="1008">马格德堡</text><text x="2616" y="972">柏林</text><text x="2068" y="1064">米德尔堡</text><text x="2245" y="1090">杜塞尔多夫</text><text x="2634" y="1106">德勒斯登</text><text x="2038" y="1142">里尔</text><text x="2327" y="1191">威斯巴登</text><text x="2209" y="1232">卢森堡市</text><text x="2068" y="1236">拉昂</text><text x="2486" y="1245">纽伦堡</text><text x="2380" y="1303">斯图加特</text><text x="2212" y="1310">南锡</text><text x="2094" y="1344">特鲁瓦</text><text x="2514" y="1357">慕尼黑</text>
                <g class="country"><text x="1794" y="1008">英国</text><text x="2375" y="641">丹麦</text><text x="2146" y="1019">荷兰</text><text x="2116" y="1153">比利时</text><text x="1441" y="922">爱尔兰</text></g>
                <g class="country big"><text x="2424" y="1092">德国</text></g>
              </g>

              <use href="#parks" class="aura"/>
              <use href="#parks"/>
              <path class="broads" d="M1948 952l3 8 6-2M1953 960v8l8 2M1943 966l10 4 8 10M1941 982l12-3 5 6M1950 990l4-14M1946 1001h14M1961 966v34M1956 978l4 22M1945 975l8 4M1957 990l-6 8"/>
              <g class="callout"><text x="1571" y="504">凯恩戈姆国</text><text x="1571" y="541">家公园</text></g>
            </svg>
            <small>© 2021 Mapbox © OpenStreetMap</small>
          </div>
        </section>
        <section class="legend">
          <h2>公园名称</h2>
          <ul>
            <li><i style="background:#3a6398"></i>埃克斯穆尔国家公园</li>
            <li><i style="background:#8fbfe6"></i>北约克湿地国家公园</li>
            <li><i style="background:#f07c13"></i>布雷肯比肯斯国家公园</li>
            <li><i style="background:#ffb066"></i>布罗兹管理局</li>
            <li><i style="background:#48943b"></i>达特穆尔国家公园</li>
            <li><i style="background:#7acc67"></i>峰区国家公园</li>
            <li><i style="background:#a88b16"></i>湖区国家公园</li>
            <li><i style="background:#efc648"></i>凯恩戈姆国家公园</li>
            <li><i style="background:#398981"></i>洛蒙德湖与特罗萨克..</li>
            <li><i style="background:#73afa8"></i>南唐斯国家公园</li>
            <li><i style="background:#db3b45"></i>诺森伯兰国家公园</li>
            <li><i style="background:#ff8886"></i>潘布鲁克郡海岸国家..</li>
            <li><i style="background:#665a59"></i>新森林国家公园</li>
            <li><i style="background:#aaa09b"></i>雪墩山国家公园</li>
            <li><i style="background:#c95883"></i>约克郡河谷国家公园</li>
          </ul>
        </section>
      </div>
      <section class="card caption">
        <h2>说明</h2>
        <p>注：</p>
        <p>1.点击“分析”，取消“聚合度量”</p>
        <p>2.“标记”处，选择“多边形”</p>
      </section>
    </div>
  </main>

  <nav class="sheets" aria-label="工作表">
    <button class="source"><svg width="18" height="24"><use href="#i-src"/></svg>数据源</button>
    <button class="current">英国国家公园多边形地图</button>
    <button>香港地铁背景图地图</button>
    <button class="add" aria-label="新建工作表"><svg width="32" height="32"><use href="#i-t1"/></svg></button>
    <button class="add" aria-label="新建仪表板"><svg width="32" height="32"><use href="#i-t2"/></svg></button>
    <button class="add" aria-label="新建故事"><svg width="32" height="32"><use href="#i-t3"/></svg></button>
  </nav>

  <footer class="status">
    <div class="facts"><span>5496 个标记</span><span>1 行 x 1 列</span><span>平均值(经度) 的总和: -12,491.250</span></div>
    <div class="slot user"></div><div class="slot"></div><div class="slot"></div><div class="slot mid"></div>
    <div class="slot pager">
      <button aria-label="第一个"><svg width="16" height="16"><path d="M2 0h2v16H2zM14 0v16L6 8z"/></svg></button>
      <button aria-label="上一个"><svg width="16" height="16"><path d="M12 0v16L4 8z"/></svg></button>
      <button aria-label="下一个"><svg width="16" height="16"><path d="M4 0v16l8-8z"/></svg></button>
      <button aria-label="最后一个"><svg width="16" height="16"><path d="M12 0h2v16h-2zM2 0v16l8-8z"/></svg></button>
    </div>
    <div class="slot modes">
      <button aria-label="显示工作表排序程序"><svg width="22" height="22"><path d="M0 0h6v6H0zM8 0h6v6H8zM16 0h6v6h-6zM0 8h6v6H0zM8 8h6v6H8zM16 8h6v6h-6zM0 16h6v6H0zM8 16h6v6H8zM16 16h6v6h-6z"/></svg></button>
      <button aria-label="显示连环缩略图"><svg width="22" height="22"><path d="M0 0h22v14H0zM0 16h6v6H0zM8 16h6v6H8zM16 16h6v6h-6z"/></svg></button>
      <button class="live" aria-label="显示选项卡"><svg width="22" height="22"><path d="M0 0h22v22H0z"/></svg></button>
    </div>
  </footer>
</div>
<script src="map.js"></script>
</body>
</html>
```
FILE: map.js
```js
// Adds natural detail to the simplified outlines of the map:
// each straight segment is split at a displaced midpoint, over and over.
(function () {
  var SHORTEST = 8;   // segments below this length stay straight
  var LONGEST = 200;  // longer ones are the frame of the drawing, not a coast
  var SHIFT = 9;      // greatest move of a midpoint

  function noise(x1, y1, x2, y2) {
    var s = Math.sin((x1 + x2) * 12.9898 + (y1 + y2) * 78.233) * 43758.5453;
    return (s - Math.floor(s)) * 2 - 1;
  }

  function split(a, b, amount, out) {
    var dx = b[0] - a[0], dy = b[1] - a[1];
    var length = Math.hypot(dx, dy);
    if (length < SHORTEST || length > LONGEST) {
      out.push(b);
      return;
    }
    var k = noise(a[0], a[1], b[0], b[1]) * Math.min(amount, SHIFT / length);
    var m = [(a[0] + b[0]) / 2 - dy * k, (a[1] + b[1]) / 2 + dx * k];
    split(a, m, amount, out);
    split(m, b, amount, out);
  }

  function roughen(d, amount) {
    return d.split('M').filter(Boolean).map(function (part) {
      var closed = /z/.test(part);
      var n = part.match(/-?\d+(\.\d+)?/g).map(Number);
      var points = [];
      for (var i = 0; i < n.length; i += 2) points.push([n[i], n[i + 1]]);
      if (closed) points.push(points[0]);
      var out = [points[0]];
      for (var j = 1; j < points.length; j++) {
        split(points[j - 1], points[j], amount, out);
      }
      return 'M' + out.map(function (p) {
        return p[0].toFixed(1) + ' ' + p[1].toFixed(1);
      }).join(' ') + (closed ? 'z' : '');
    }).join('');
  }

  document.querySelectorAll('[data-rough]').forEach(function (group) {
    var amount = Number(group.dataset.rough);
    group.querySelectorAll('path').forEach(function (path) {
      path.setAttribute('d', roughen(path.getAttribute('d'), amount * 2));
    });
  });
})();
```
FILE: styles.css
```css
* { box-sizing: border-box; }

body {
  margin: 0;
  padding: 76px 112px 148px;
  min-height: 100vh;
  background: #fff;
  color: #262626;
  font: 24px/36px Inter, "Noto Sans CJK SC", sans-serif;
}

h1, h2, p, ul { margin: 0; padding: 0; }
h2 { font-size: 24px; font-weight: 400; line-height: 36px; }
ul { list-style: none; }

button, select, input {
  margin: 0;
  padding: 0;
  border: 0;
  border-radius: 0;
  background: none;
  color: inherit;
  font: inherit;
  appearance: none;
}

svg { display: block; flex: none; fill: currentColor; }
.sprite { position: absolute; width: 0; height: 0; }
.s2, .s3, .s4 { fill: none; stroke: currentColor; stroke-width: 2; }
.s3 { stroke-width: 3; }
.s4 { stroke-width: 4; }
#i-size .s2 { fill: #f9f9f9; }
#i-poly .s2 { fill: #e3e3e3; }
#i-poly .hole { fill: #fff; }

.window {
  display: flex;
  flex-direction: column;
  min-height: calc(100vh - 224px);
  border-radius: 20px;
  overflow: hidden;
  background: #f1f1f1;
  box-shadow: 0 0 0 1px rgba(0, 0, 0, .25), 0 36px 80px rgba(0, 0, 0, .42);
}

/* Title bar */
.titlebar {
  display: grid;
  grid-template-columns: 200px 1fr 200px;
  align-items: center;
  height: 57px;
  border-bottom: 1px solid #c4c4c4;
  background: #eaebed;
}
.titlebar h1 { font-size: 26px; line-height: 54px; font-weight: 700; text-align: center; color: #3a3a3a; }
.lights { display: flex; gap: 16px; padding-left: 16px; }
.light { width: 24px; height: 24px; border-radius: 50%; border: 1px solid rgba(0, 0, 0, .1); }
.red { background: #fd4845; }
.amber { background: #fdb024; }
.green { background: #2bc232; }

/* Toolbar */
.toolbar { display: flex; align-items: center; height: 79px; color: #4f4f4f; }
.group {
  display: flex;
  align-items: center;
  height: 70px;
  padding: 0 14px 0 12px;
  border-right: 2px solid #c9c9c9;
}
.brand { padding: 0 28px 0 30px; }
.tight { padding: 0 12px 0 10px; }
.format { padding: 0 30px 0 14px; }
.show { padding: 0 18px 0 16px; }
.tool, .drop { display: grid; place-items: center; width: 60px; height: 60px; }
.tool.wide { width: 64px; }
.tool.slim { width: 56px; }
.tool svg { width: 38px; height: 38px; }
.tool.on { background: #dfdfdf; color: #1c1c1c; }
.tool .soft { color: #8f8f8f; }
.tool:disabled, .drop:disabled { color: #ababab; }
.drop { width: 24px; padding-right: 4px; }
.drop svg { width: 12px; height: 10px; }
.fit { display: flex; align-items: center; width: 168px; height: 46px; margin-left: 18px; border: 2px solid #c9c9c9; border-radius: 3px; color: #c4c4c4; }
.fit select { flex: 1; }
.fit svg { width: 14px; height: 10px; margin-right: 10px; }
.showme { display: flex; align-items: center; gap: 10px; margin: 0 56px 0 auto; color: #1a1a1a; font-weight: 500; }

/* Workspace */
.workspace {
  flex: 1;
  display: grid;
  grid-template-columns: 420px 308px minmax(0, 1fr);
  column-gap: 12px;
  padding-right: 12px;
}

.data { border: solid #c9c9c9; border-width: 2px 2px 0 0; background: #fff; }
.tabs { display: flex; }
.tab { flex: none; width: 202px; height: 56px; padding: 0 36px; text-align: left; font-weight: 500; }
.tab:last-child {
  display: flex;
  flex: 1;
  align-items: center;
  justify-content: space-between;
  padding: 0 14px 0 24px;
  border: solid #c9c9c9;
  border-width: 0 0 2px 2px;
  background: #f9f9f9;
}
.sources { padding: 8px 22px 11px; border-bottom: 2px solid #e0e0e0; }
.sources li { display: flex; align-items: center; gap: 10px; height: 40px; padding-left: 18px; white-space: nowrap; overflow: hidden; }
.sources .latin { font-size: 23px; }
.sources svg { width: 34px; height: 34px; color: #5a5a5a; }
.sources .picked { background: #dfdfdf; }

.finder { display: flex; align-items: center; margin: 21px 16px 0; color: #4f4f4f; }
.finder button { display: grid; place-items: center; height: 36px; }
.search { display: flex; align-items: center; width: 264px; height: 46px; padding: 0 13px 0 16px; border: 2px solid #bdbdbd; border-radius: 3px; }
.search input { flex: 1; min-width: 0; outline: 0; }
.search input::placeholder { color: #8a8a8a; opacity: 1; }
.search svg { width: 20px; height: 20px; }
.finder .filter { width: 44px; border-right: 2px solid #d4d4d4; }
.finder .view { width: 48px; }
.finder .more { width: 28px; }

.data h2 { margin: 13px 0 5px 36px; line-height: 42px; color: #111; font-weight: 500; }
.fields li { display: flex; align-items: center; gap: 14px; height: 42px; padding-left: 36px; color: #111; white-space: nowrap; }
.dims::after { content: ""; display: block; height: 2px; margin: 0 12px 2px 30px; background: #d4d4d4; }
.kind { display: grid; place-items: center; width: 44px; font-size: 18px; color: #2a6a8f; }
.kind svg { width: 22px; height: 22px; }
.meas .kind { color: #2f9c6b; }
.gen { font-style: italic; }
.gen .kind { font-style: normal; }

/* Cards */
.cards { display: flex; flex-direction: column; gap: 12px; }
.card { padding: 12px 12px 0; border: 2px solid #c9c9c9; background: #f9f9f9; }
.pages { height: 124px; }
.filters { height: 156px; }
.marks { padding-bottom: 48px; }

.marktype { display: flex; align-items: center; height: 42px; margin-top: 22px; border: 2px solid #bdbdbd; border-radius: 3px; font-size: 20px; }
.glyph { width: 24px; height: 20px; margin: 0 12px 0 22px; color: #777; }
.marktype select { flex: 1; height: 100%; line-height: 30px; }
.arrow { display: grid; place-items: center; align-self: stretch; width: 36px; border-left: 2px solid #d4d4d4; }
.arrow svg { width: 14px; height: 10px; }

.markgrid { display: grid; grid-template-columns: repeat(3, 1fr); gap: 12px; margin-top: 12px; }
.markgrid button { display: flex; flex-direction: column; align-items: center; justify-content: space-between; height: 84px; padding: 11px 0 3px; border: 2px solid #c9c9c9; font-size: 18px; line-height: 24px; color: #3a3a3a; white-space: nowrap; }
.markgrid svg { width: 30px; height: 30px; }
.markgrid button:disabled { color: #bcbcbc; }
.markgrid button:disabled svg { color: #d8d8d8; }

.encodings { display: grid; grid-template-columns: 28px 222px; column-gap: 10px; row-gap: 6px; align-items: center; margin: 18px 0 0 12px; color: #555; }
.encodings svg { width: 28px; height: 26px; }
.pill { display: block; height: 40px; border-radius: 20px; padding: 0 22px; text-align: left; color: #fff; line-height: 36px; }
.blue { background: #3882a4; }
.green.pill { width: 296px; background: #05a66b; }

/* Sheet */
.sheet { display: flex; flex-direction: column; gap: 12px; padding-bottom: 12px; }
.shelf { display: flex; align-items: center; height: 56px; border: 2px solid #c9c9c9; background: #f9f9f9; }
.shelf h2 { display: flex; align-items: center; align-self: stretch; gap: 14px; width: 248px; margin-right: 6px; padding-left: 12px; border-right: 2px solid #c9c9c9; }
.shelf h2 svg { width: 24px; height: 26px; color: #4f4f4f; }

.stage { flex: 1; display: grid; grid-template-columns: minmax(0, 1fr) 308px; column-gap: 12px; }
.viz { display: flex; flex-direction: column; padding: 12px 11px 12px 10px; border: 2px solid #c9c9c9; background: #fff; }
.viz h2 { padding-left: 10px; font-size: 40px; line-height: 76px; color: #222; }
.map { position: relative; flex: 1; border: 2px solid #dcdcdc; background: #c1d2d2; overflow: hidden; }
.chart { position: absolute; inset: 0; width: 100%; height: 100%; }
.map small { position: absolute; left: 4px; bottom: 2px; padding: 0 6px; background: rgba(255, 255, 255, .85); font: 16px/24px "Liberation Sans", sans-serif; color: #333; }

.chart path { vector-effect: non-scaling-stroke; }
.land { fill: #e9e9e9; stroke: #8c8c8c; stroke-width: 2; stroke-linejoin: round; }
.water { fill: #c1d2d2; }
.lake { fill: #c1d2d2; stroke: none; }
.halo { fill: none; stroke: #f5f5f5; stroke-width: 6; stroke-linejoin: round; }
.halo.broad { stroke: #f8f8f8; stroke-width: 16; }
.edge { fill: none; stroke: #a3a3a3; stroke-width: 2; stroke-linejoin: round; }
.edge.strong { stroke: #8c8c8c; }
.towns { fill: #ededed; stroke: #9a9a9a; stroke-width: 2; }
.names { font: 24px "Noto Sans CJK SC", sans-serif; text-anchor: middle; fill: #6b6b6b; stroke: #f4f4f4; stroke-width: 4px; stroke-linejoin: round; paint-order: stroke; }
.names .isle { font-size: 22px; }
.country { font-size: 30px; fill: #8a8a8a; }
.country.big { font-size: 34px; }
.aura { stroke: #ededed; stroke-width: 12; stroke-linejoin: round; }
.broads { fill: none; stroke: #fbb36f; stroke-width: 2; }
.callout { font: 26px "Noto Sans CJK SC", sans-serif; text-anchor: middle; fill: #222; }

.legend { align-self: start; border: 2px solid #c9c9c9; background: #fff; }
.legend h2 { padding-left: 11px; line-height: 60px; background: #f9f9f9; }
.legend li { display: flex; align-items: center; gap: 10px; height: 40px; padding-left: 6px; white-space: nowrap; }
.legend i { width: 28px; height: 28px; }

.caption { height: 176px; overflow: hidden; }
.caption h2 { margin-bottom: 22px; }
.caption p { color: #555; }

/* Sheet tabs */
.sheets { display: flex; height: 62px; border: solid #c4c4c4; border-width: 2px 0; background: #dfdfdf; color: #444; }
.sheets button { padding: 0 12px; border-right: 2px solid #bdbdbd; }
.sheets .source { display: flex; align-items: center; gap: 10px; width: 262px; padding-left: 20px; }
.sheets .current { background: #f9f9f9; }
.sheets .add { display: grid; place-items: center; width: 64px; }

/* Status bar */
.status { display: flex; height: 40px; background: #e5e5e5; color: #111; font-size: 20px; line-height: 40px; }
.facts { display: flex; flex: 1; gap: 34px; padding-left: 24px; }
.slot { display: flex; align-items: center; width: 54px; border-left: 2px solid #bdbdbd; color: #b0b0b0; }
.slot.user { width: 254px; }
.slot.mid { width: 94px; }
.slot.pager { width: 142px; padding-left: 6px; }
.slot.modes { width: 153px; padding-left: 6px; }
.pager button { display: grid; place-items: center; width: 32px; height: 36px; }
.modes button { display: grid; place-items: center; width: 42px; height: 36px; }
.modes .live { color: #555; }
```
